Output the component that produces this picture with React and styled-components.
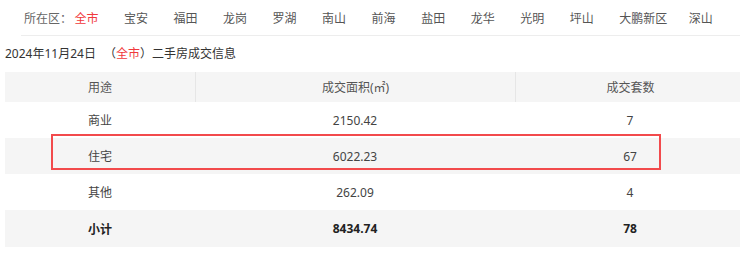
import React from "react";
import styled, { createGlobalStyle } from "styled-components";

const Global = createGlobalStyle`
  html, body { margin: 0; padding: 0; background: #fff; overflow: hidden; }
  body { font-family: "Noto Sans", "Noto Sans CJK SC", sans-serif; font-size: 12px; color: #333; }
`;

const Page = styled.div`
  padding-left: 5px;
  width: 745px;
`;

const Nav = styled.div`
  margin-left: 16px;
  height: 35px;
  border-bottom: 1px solid #ededed;
  display: flex;
  align-items: center;
  padding-left: 3px;
  gap: 25.5px;
  font-size: 12px;
  color: #555;
`;

const NavLabel = styled.span`
  color: #666;
  margin-right: -23px;
`;

const NavItem = styled.span`
  color: ${(p) => (p.$active ? "#f0393c" : "#555")};
  white-space: nowrap;
  margin-right: ${(p) => (p.$tight ? "-4px" : "0")};
`;

const DateLine = styled.div`
  height: 36px;
  line-height: 28px;
  font-size: 12px;
  color: #333;
  display: flex;
  align-items: center;
`;

const Paren = styled.span`
  margin-left: 8px;
`;

const Red = styled.span`
  color: #f0393c;
`;

const TableWrap = styled.div`
  position: relative;
  width: 740px;
`;

const Row = styled.div`
  display: grid;
  grid-template-columns: 190px 320px 230px;
  height: ${(p) => p.$h || 36}px;
  background: ${(p) => (p.$grey ? "#f5f5f5" : "#fff")};
  font-weight: ${(p) => (p.$bold ? 700 : 400)};
  color: ${(p) => (p.$bold ? "#222" : "#444")};
`;

const Cell = styled.div`
  display: flex;
  align-items: center;
  justify-content: center;
  font-size: 12px;
  border-left: ${(p) => (p.$divider ? "1px solid #e6e6e6" : "none")};
`;

const HeadCell = styled(Cell)`
  color: #555;
`;

const Highlight = styled.div`
  position: absolute;
  left: 46px;
  top: 62px;
  width: 610px;
  height: 36px;
  box-sizing: border-box;
  border: 2px solid #f24a4c;
  pointer-events: none;
`;

const districts = ["全市", "宝安", "福田", "龙岗", "罗湖", "南山", "前海", "盐田", "龙华", "光明", "坪山", "大鹏新区", "深山"];

const rows = [
  { name: "商业", area: "2150.42", count: "7" },
  { name: "住宅", area: "6022.23", count: "67", grey: true },
  { name: "其他", area: "262.09", count: "4" },
];

export default function App() {
  return (
    <Page>
      <Global />
      <Nav>
        <NavLabel>所在区：</NavLabel>
        {districts.map((d, i) => (
          <NavItem key={d} $active={i === 0} $tight={d.length > 2}>{d}</NavItem>
        ))}
      </Nav>
      <DateLine>
        2024年11月24日
        <Paren>（<Red>全市</Red>）二手房成交信息</Paren>
      </DateLine>
      <TableWrap>
        <Row $grey $h={30}>
          <HeadCell>用途</HeadCell>
          <HeadCell $divider>成交面积(㎡)</HeadCell>
          <HeadCell $divider>成交套数</HeadCell>
        </Row>
        {rows.map((r) => (
          <Row key={r.name} $grey={r.grey}>
            <Cell>{r.name}</Cell>
            <Cell>{r.area}</Cell>
            <Cell>{r.count}</Cell>
          </Row>
        ))}
        <Row $grey $bold $h={37}>
          <Cell>小计</Cell>
          <Cell>8434.74</Cell>
          <Cell>78</Cell>
        </Row>
        <Highlight />
      </TableWrap>
    </Page>
  );
}
